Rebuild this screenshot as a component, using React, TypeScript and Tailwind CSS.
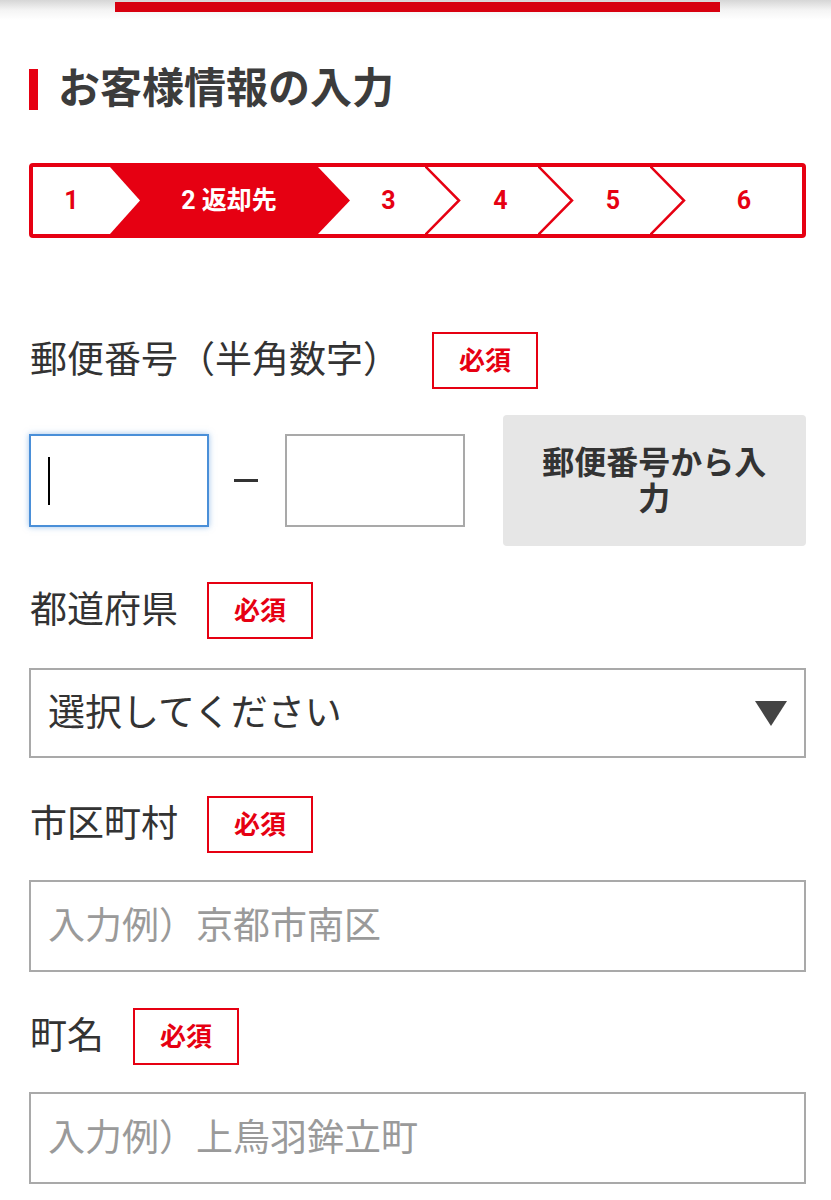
import React from "react";

const RED = "#e60012";

function Badge({ className = "" }: { className?: string }) {
  return (
    <div
      className={`flex h-[57px] w-[106px] shrink-0 items-center justify-center border-2 border-[#e60012] text-[26px] font-bold leading-none text-[#e60012] ${className}`}
    >
      必須
    </div>
  );
}

function OutlineTip() {
  return (
    <svg className="absolute right-[-34px] top-0 h-full w-[36px]" viewBox="0 0 36 67" preserveAspectRatio="none">
      <polyline points="0,-1 34,33.5 0,68" fill="none" stroke={RED} strokeWidth="2.5" />
    </svg>
  );
}

function Stepper() {
  return (
    <div className="mt-[53px] flex h-[75px] overflow-hidden rounded-[4px] border-4 border-[#e60012] bg-white">
      {/* step 1 */}
      <div className="relative z-[6] flex w-[77px] shrink-0 items-center justify-center bg-white text-[25px] font-bold text-[#e60012]">
        1
        <svg className="absolute right-[-30px] top-0 h-full w-[30px]" viewBox="0 0 30 67" preserveAspectRatio="none">
          <polygon points="0,0 30,33.5 0,67" fill="#ffffff" />
        </svg>
      </div>
      {/* step 2 */}
      <div className="relative z-[5] flex w-[208px] shrink-0 items-center justify-center bg-[#e60012] pl-[30px] text-[25px] font-bold text-white">
        2 返却先
        <svg className="absolute right-[-32px] top-0 h-full w-[32px]" viewBox="0 0 32 67" preserveAspectRatio="none">
          <polygon points="0,0 32,33.5 0,67" fill={RED} />
        </svg>
      </div>
      {/* step 3 */}
      <div className="relative z-[4] flex w-[109px] shrink-0 items-center justify-center bg-white pl-[32px] text-[25px] font-bold text-[#e60012]">
        3
        <OutlineTip />
      </div>
      {/* step 4 */}
      <div className="relative z-[3] flex w-[113px] shrink-0 items-center justify-center bg-white pl-[34px] text-[25px] font-bold text-[#e60012]">
        4
        <OutlineTip />
      </div>
      {/* step 5 */}
      <div className="relative z-[2] flex w-[112px] shrink-0 items-center justify-center bg-white pl-[34px] text-[25px] font-bold text-[#e60012]">
        5
        <OutlineTip />
      </div>
      {/* step 6 */}
      <div className="relative z-[1] flex flex-1 items-center justify-center bg-white pl-[34px] text-[25px] font-bold text-[#e60012]">
        6
      </div>
    </div>
  );
}

export default function App() {
  return (
    <div className="min-h-[1200px] w-[831px] bg-white font-[Roboto,'Noto_Sans_CJK_JP',sans-serif] text-[#333333]">
      {/* top strip */}
      <div className="h-[20px] bg-linear-to-b from-[#d6d6d6] via-[#f4f4f4] to-white pt-[2px]">
        <div className="ml-[115px] h-[10px] w-[605px] bg-[#d7000f]" />
      </div>

      <div className="pl-[29px] pr-[25px]">
        {/* heading */}
        <div className="mt-[48px] flex items-center">
          <div className="h-[41px] w-[9px] bg-[#e60012]" />
          <h1 className="ml-[20px] text-[42px] font-bold leading-none text-[#3c3c3c]">
            お客様情報の入力
          </h1>
        </div>

        <Stepper />

        {/* postal code */}
        <div className="mt-[94px] flex items-center">
          <span className="pl-[1px] text-[37px] leading-none">郵便番号（半角数字）</span>
          <Badge className="ml-[32px]" />
        </div>
        <div className="mt-[26px] flex items-center">
          <div className="flex h-[93px] w-[180px] items-center border-2 border-[#4a8fd8] pl-[17px] shadow-[0_0_6px_rgba(74,143,216,0.55)]">
            <div className="h-[48px] w-[2px] bg-black" />
          </div>
          <div className="ml-[25px] h-[3px] w-[24px] bg-[#333333]" />
          <input
            className="ml-[27px] h-[93px] w-[180px] border-2 border-[#a9a9a9] bg-white px-[17px] text-[37px] outline-none"
            readOnly
          />
          <button className="ml-[38px] flex h-[131px] w-[304px] items-center justify-center rounded-[4px] bg-[#e6e6e6] px-[36px] text-center text-[32px] font-bold leading-[36px] text-[#333333]">
            郵便番号から入力
          </button>
        </div>

        {/* prefecture */}
        <div className="mt-[36px] flex items-center">
          <span className="pl-[1px] text-[37px] leading-none">都道府県</span>
          <Badge className="ml-[29px]" />
        </div>
        <div className="mt-[29px] flex h-[90px] items-center justify-between border-2 border-[#a9a9a9] pl-[17px] pr-[17px]">
          <span className="text-[37px] leading-none text-[#333333]">選択してください</span>
          <svg width="32" height="25" viewBox="0 0 32 25">
            <polygon points="0,0 32,0 16,25" fill="#444444" />
          </svg>
        </div>

        {/* city */}
        <div className="mt-[38px] flex items-center">
          <span className="pl-[1px] text-[37px] leading-none">市区町村</span>
          <Badge className="ml-[29px]" />
        </div>
        <input
          className="mt-[27px] block h-[92px] w-full border-2 border-[#a9a9a9] bg-white px-[17px] text-[37px] outline-none placeholder:text-[#9a9a9a]"
          placeholder="入力例）京都市南区"
          readOnly
        />

        {/* town */}
        <div className="mt-[36px] flex items-center">
          <span className="pl-[1px] text-[37px] leading-none">町名</span>
          <Badge className="ml-[29px]" />
        </div>
        <input
          className="mt-[27px] block h-[92px] w-full border-2 border-[#a9a9a9] bg-white px-[17px] text-[37px] outline-none placeholder:text-[#9a9a9a]"
          placeholder="入力例）上鳥羽鉾立町"
          readOnly
        />
      </div>
    </div>
  );
}
